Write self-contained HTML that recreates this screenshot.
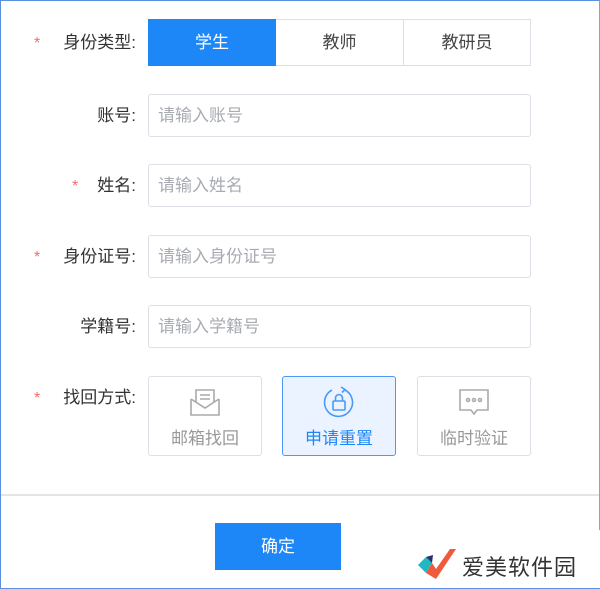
<!DOCTYPE html>
<html><head><meta charset="utf-8"><style>
*{box-sizing:border-box;margin:0;padding:0}
body{width:600px;height:589px;overflow:hidden;background:#fff;font-family:"Liberation Sans","Noto Sans CJK SC",sans-serif;}
.frame{position:absolute;left:0;top:0;width:600px;height:589px;border:1px solid #5b8fe0;border-right-color:#7aa5e6;}
.lbl{position:absolute;right:464px;font-size:17px;color:#333;white-space:nowrap;height:43px;line-height:43px}
.star{position:absolute;left:34px;color:#f56c6c;font-size:16px;height:43px;line-height:46px}
.inp{position:absolute;left:148px;width:383px;height:43px;border:1px solid #dcdfe6;border-radius:3px;font-size:17px;color:#a8abb2;padding-left:9px;line-height:41px}
.seg{position:absolute;top:19px;height:47px;width:128px;border:1px solid #dcdfe6;font-size:17px;color:#444;text-align:center;line-height:45px}
.m{position:absolute;top:376px;width:114px;height:80px;border:1px solid #dcdfe6;border-radius:3px;text-align:center;font-size:17px;color:#999}
.m svg{position:absolute;left:39px;top:8px}
.m span{position:absolute;left:0;right:0;top:50px;line-height:24px}
</style></head><body>
<div class="frame"></div>
<span class="star" style="top:21px">*</span><div class="lbl" style="top:21px">身份类型:</div>
<div class="seg" style="left:148px;background:#1e87f8;border-color:#1e87f8;color:#fff">学生</div>
<div class="seg" style="left:276px;border-left:none">教师</div>
<div class="seg" style="left:403px">教研员</div>
<div class="lbl" style="top:94px">账号:</div><div class="inp" style="top:94px">请输入账号</div>
<span class="star" style="top:164px;left:72px">*</span><div class="lbl" style="top:164px">姓名:</div><div class="inp" style="top:164px">请输入姓名</div>
<span class="star" style="top:235px">*</span><div class="lbl" style="top:235px">身份证号:</div><div class="inp" style="top:235px">请输入身份证号</div>
<div class="lbl" style="top:305px">学籍号:</div><div class="inp" style="top:305px">请输入学籍号</div>
<span class="star" style="top:376px">*</span><div class="lbl" style="top:376px">找回方式:</div>
<div class="m" style="left:148px"><svg width="34" height="34" viewBox="0 0 34 34" fill="none" stroke="#aaa" stroke-width="1.6"><path d="M3 14v16h28V14"/><path d="M3 14l14 9 14-9"/><path d="M8 17V5h18v12"/><path d="M12 10h10M12 14h10"/></svg><span>邮箱找回</span></div>
<div class="m" style="left:282px;border-color:#4a9af5;background:#eaf3ff;color:#1e87f8"><svg width="34" height="34" viewBox="0 0 34 34" fill="none" stroke="#4a9af5" stroke-width="1.6"><path d="M22 4.5A14 14 0 1 1 10 5"/><path d="M19 2l4 2.5-3 3"/><rect x="11" y="16" width="12" height="9" rx="1"/><path d="M13.5 16v-3a3.5 3.5 0 0 1 7 0v3"/></svg><span>申请重置</span></div>
<div class="m" style="left:417px"><svg width="34" height="34" viewBox="0 0 34 34" fill="none" stroke="#aaa" stroke-width="1.6"><path d="M3 5h28v20H20l-3 4-3-4H3z"/><circle cx="11" cy="15" r="1.5"/><circle cx="17" cy="15" r="1.5"/><circle cx="23" cy="15" r="1.5"/></svg><span>临时验证</span></div>
<div style="position:absolute;left:1px;right:1px;top:494px;height:2px;background:#e4e4e4"></div>
<div style="position:absolute;left:215px;top:523px;width:126px;height:47px;background:#1e87f8;color:#fff;font-size:17px;text-align:center;line-height:47px">确定</div>
<div style="position:absolute;left:410px;top:530px;width:190px;height:58px;background:#fff"></div>
<svg style="position:absolute;left:416px;top:547px" width="40" height="34" viewBox="0 0 40 34"><path d="M2 18l8-8 6 6-6 10z" fill="#1fb8c3"/><path d="M10 10l7-2 -1 8z" fill="#2a2f6e"/><path d="M10 26l6-10 4 6L34 2l6 0-20 30z" fill="#ef5a3c"/></svg>
<div style="position:absolute;left:462px;top:550px;font-size:22px;color:#333;letter-spacing:1px">爱美软件园</div>
</body></html>
